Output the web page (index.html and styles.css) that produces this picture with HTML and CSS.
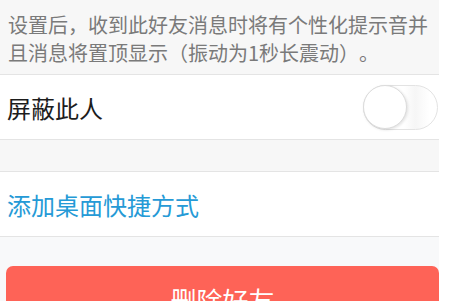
FILE: index.html
```html
<!DOCTYPE html>
<html lang="zh-CN">
<head>
    <meta charset="UTF-8">
    <meta name="viewport" content="width=device-width, initial-scale=1.0">
    <title>好友设置</title>
    <link rel="stylesheet" href="styles.css">
</head>
<body>
    <div class="page">
        <p class="tip">设置后，收到此好友消息时将有个性化提示音并且消息将置顶显示（振动为1秒长震动）。</p>

        <div class="row">
            <span class="label">屏蔽此人</span>
            <div class="switch"><div class="knob"></div></div>
        </div>

        <div class="gap"></div>

        <div class="row row-top">
            <span class="label link">添加桌面快捷方式</span>
        </div>

        <div class="bottom">
            <button type="button" class="delete">删除好友</button>
        </div>
    </div>
</body>
</html>
```

FILE: styles.css
```css
body {
    margin: 0;
    background-color: #fff;
    font-family: "Noto Sans CJK SC", "Noto Sans", sans-serif;
}

.page {
    width: 439px;
}

.tip {
    margin: 0;
    padding: 11px 8px 7px 8px;
    background-color: #f7f7f7;
    color: #7a7a7a;
    font-size: 20px;
    line-height: 28px;
    text-spacing-trim: space-all;
    border-bottom: 1px solid #e4e4e4;
}

.row {
    display: flex;
    align-items: center;
    justify-content: space-between;
    height: 64px;
    padding: 0 1px 0 7px;
    background-color: #fff;
    border-bottom: 1px solid #e4e4e4;
}

.row-top {
    border-top: 1px solid #e4e4e4;
}

.label {
    font-size: 24px;
    line-height: 30px;
    padding-top: 1px;
    color: #1c1c1c;
}

.link {
    color: #259ad6;
}

.gap {
    height: 31px;
    background-color: #f7f7f7;
}

.switch {
    display: flex;
    align-items: center;
    box-sizing: border-box;
    width: 75px;
    height: 45px;
    border: 1.5px solid #e3e3e3;
    border-radius: 23px;
    background: linear-gradient(to right, #fff 55%, #f6f6f6 70%, #fff 90%);
}

.knob {
    box-sizing: border-box;
    width: 44px;
    height: 44px;
    margin-left: -1px;
    border-radius: 50%;
    background-color: #fff;
    border: 1.5px solid #dcdcdc;
    box-shadow: 1px 1px 3px rgba(0, 0, 0, 0.12);
}

.bottom {
    padding: 29px 0 20px 6px;
    background-color: #f8f9fa;
}

.delete {
    display: block;
    width: 433px;
    height: 66px;
    border: none;
    border-radius: 7px;
    background-color: #fe6357;
    color: #fff;
    font-family: "Noto Sans CJK SC", "Noto Sans", sans-serif;
    font-size: 26px;
    padding-top: 2px;
}
```
